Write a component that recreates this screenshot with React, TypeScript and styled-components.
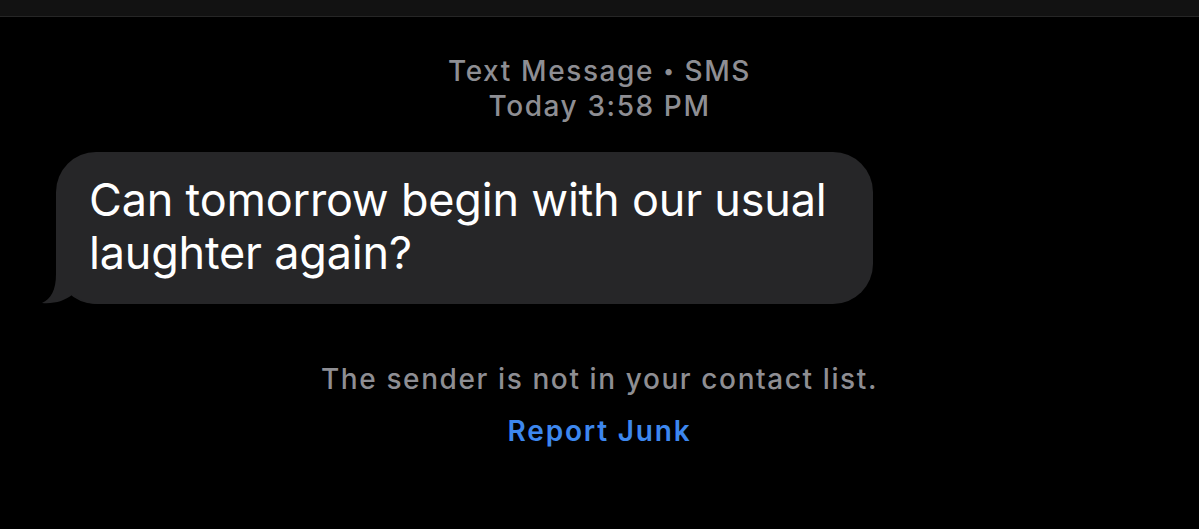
import {FC} from 'react'
import styled, {createGlobalStyle} from 'styled-components'

const GlobalStyle = createGlobalStyle`
    html, body {
        margin: 0;
        padding: 0;
        background: #000;
    }
    body {
        font-family: Inter, "Noto Sans", "Liberation Sans", sans-serif;
        -webkit-font-smoothing: antialiased;
    }
`

const Screen = styled.div`
    width: 1199px;
    height: 529px;
    overflow: hidden;
    background: #000;
    display: flex;
    flex-direction: column;
`

const TopBar = styled.div`
    height: 16px;
    background: #121212;
    border-bottom: 1px solid #262626;
`

const Meta = styled.div`
    margin-top: 37px;
    text-align: center;
    color: #8e8e93;
    font-size: 28px;
    line-height: 35px;
    font-weight: 500;
    letter-spacing: 1.6px;
`

const Dot = styled.span`
    font-size: 20px;
    vertical-align: 3px;
`

const Thread = styled.div`
    margin-top: 28px;
    padding-left: 56px;
    display: flex;
`

const Bubble = styled.div`
    position: relative;
    box-sizing: border-box;
    width: 817px;
    padding: 21px 40px 25px 33px;
    background: #262628;
    border-radius: 40px;
    color: #fff;
    font-size: 45px;
    line-height: 53px;
    letter-spacing: -0.2px;
`

const Tail = styled.svg`
    position: absolute;
    left: -16px;
    bottom: 0;
    width: 60px;
    height: 44px;
    display: block;
`

const BubbleText = styled.span`
    position: relative;
`

const Notice = styled.div`
    margin-top: 58px;
    display: flex;
    flex-direction: column;
    align-items: center;
    gap: 17px;
`

const NoticeText = styled.div<{$link?: boolean}>`
    font-size: 28px;
    line-height: 35px;
    letter-spacing: ${p => (p.$link ? '1.8px' : '1.6px')};
    color: ${p => (p.$link ? '#3d87ee' : '#8e8e93')};
    font-weight: ${p => (p.$link ? 600 : 500)};
    cursor: ${p => (p.$link ? 'pointer' : 'default')};
`

const App: FC = () => {
    return (
        <Screen>
            <GlobalStyle />
            <TopBar />
            <Meta>
                <div>Text Message <Dot>•</Dot> SMS</div>
                <div>Today 3:58 PM</div>
            </Meta>
            <Thread>
                <Bubble>
                    <Tail viewBox="0 0 60 44">
                        <path
                            d="M16 0 L16 14 C16 30 11 39 2 43 C14 44 25 41 33 34 C40 40 48 44 58 44 L60 44 L60 0 Z"
                            fill="#262628"
                        />
                    </Tail>
                    <BubbleText>Can tomorrow begin with our usual laughter again?</BubbleText>
                </Bubble>
            </Thread>
            <Notice>
                <NoticeText>The sender is not in your contact list.</NoticeText>
                <NoticeText $link>Report Junk</NoticeText>
            </Notice>
        </Screen>
    )
}

export default App
